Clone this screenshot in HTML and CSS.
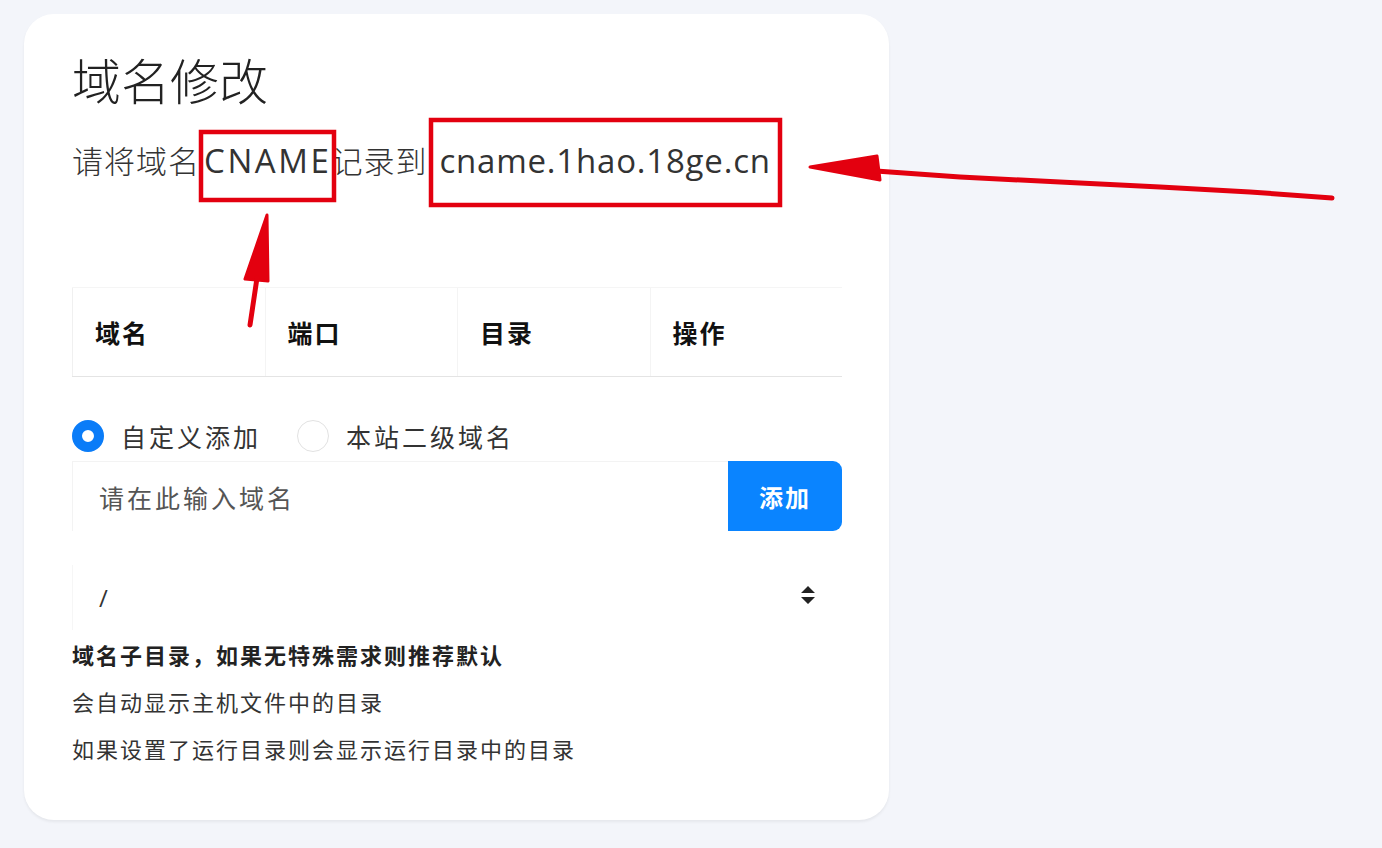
FILE: index.html
```html
<!DOCTYPE html>
<html lang="zh-CN">
<head>
    <meta charset="UTF-8">
    <meta name="viewport" content="width=device-width, initial-scale=1.0">
    <title>域名修改</title>
    <link rel="stylesheet" href="styles.css">
</head>
<body>
    <div class="card">
        <h1 class="title">域名修改</h1>
        <p class="cname-tip">请将域名<span class="latin">CNAME</span>记录到 <span class="latin host">cname.1hao.18ge.cn</span></p>

        <div class="domain-table">
            <div class="th">域名</div>
            <div class="th">端口</div>
            <div class="th">目录</div>
            <div class="th">操作</div>
        </div>

        <div class="radio-row">
            <label class="radio checked"><span class="dot"></span>自定义添加</label>
            <label class="radio"><span class="dot"></span>本站二级域名</label>
        </div>

        <div class="add-row">
            <div class="domain-input">请在此输入域名</div>
            <button class="btn-add">添加</button>
        </div>

        <div class="dir-select">
            <span>/</span>
            <svg class="sort-icon" width="16" height="20" viewBox="0 0 16 20"><path d="M8 1 L15 8 L1 8 Z M1 12 L15 12 L8 19 Z" fill="#222"/></svg>
        </div>

        <div class="help">
            <p class="strong">域名子目录，如果无特殊需求则推荐默认</p>
            <p>会自动显示主机文件中的目录</p>
            <p>如果设置了运行目录则会显示运行目录中的目录</p>
        </div>
    </div>

    <!-- 标注：红框和箭头 -->
    <svg class="marks" width="1382" height="848" viewBox="0 0 1382 848">
        <rect x="201" y="132" width="133" height="68" fill="none" stroke="#e3000f" stroke-width="4.5"/>
        <rect x="431" y="120" width="349" height="85" fill="none" stroke="#e3000f" stroke-width="4.5"/>
        <path d="M267 215 L245 279 L268 281 Z" fill="#e3000f" stroke="#e3000f" stroke-width="3" stroke-linejoin="round"/>
        <path d="M257 278 L250 325" stroke="#e3000f" stroke-width="5" stroke-linecap="round"/>
        <path d="M810 167 L877 156 L880 180 Z" fill="#e3000f" stroke="#e3000f" stroke-width="3" stroke-linejoin="round"/>
        <path d="M876 171 L960 177 L1060 182 L1160 187 L1250 192 L1332 198" fill="none" stroke="#e3000f" stroke-width="5" stroke-linecap="round"/>
    </svg>
</body>
</html>
```

FILE: styles.css
```css
body {
    margin: 0;
    padding: 14px 24px;
    background-color: #f3f5fa;
    font-family: "Noto Sans CJK SC", "Noto Sans", sans-serif;
    color: #222;
}

.card {
    width: 865px;
    height: 806px;
    box-sizing: border-box;
    padding: 35px 47px 0 48px;
    background-color: #fff;
    border-radius: 30px;
    box-shadow: 0 2px 3px rgba(0, 0, 0, 0.06);
}

.title {
    margin: 0;
    font-size: 49px;
    line-height: 60px;
    font-weight: 300;
    color: #222;
}

.cname-tip {
    margin: 27px 0 0;
    font-size: 31px;
    letter-spacing: 1px;
    line-height: 48px;
    font-weight: 300;
    color: #333;
}

.cname-tip .latin {
    font-family: "Open Sans", "Noto Sans", sans-serif;
    font-size: 33px;
    font-weight: 400;
    letter-spacing: 2.6px;
    margin-left: 4px;
}

.cname-tip .host {
    letter-spacing: 0.8px;
    margin-left: 4px;
}

/* 表头 */
.domain-table {
    margin-top: 102px;
    display: grid;
    grid-template-columns: repeat(4, 1fr);
    height: 88px;
    border-top: 1px solid #f5f5f5;
    border-bottom: 1px solid #e4e4e4;
}

.th {
    display: flex;
    align-items: center;
    padding-left: 22px;
    font-size: 25px;
    letter-spacing: 2px;
    font-weight: 700;
    color: #111;
    border-left: 1px solid #f4f4f4;
}

.th:first-child {
    border-left-color: #f0f0f0;
}

/* 单选 */
.radio-row {
    margin-top: 43px;
    display: flex;
    align-items: center;
    gap: 36px;
    height: 32px;
}

.radio {
    display: flex;
    align-items: center;
    gap: 17px;
    font-size: 25px;
    letter-spacing: 3px;
    color: #333;
}

.radio .dot {
    width: 32px;
    height: 32px;
    box-sizing: border-box;
    border-radius: 50%;
    border: 1px solid #e2e2e2;
    background: #fff;
}

.radio.checked .dot {
    border: 10px solid #0a7cf8;
}

/* 输入 + 按钮 */
.add-row {
    margin-top: 9px;
    display: flex;
    height: 70px;
}

.domain-input {
    flex: 1;
    display: flex;
    align-items: center;
    padding-left: 26px;
    font-size: 25px;
    letter-spacing: 3px;
    color: #555;
    border-top: 1px solid #f3f3f3;
    border-left: 1px solid #f3f3f3;
}

.btn-add {
    width: 114px;
    border: none;
    border-radius: 0 9px 9px 0;
    background-color: #0a84ff;
    color: #fff;
    font-family: inherit;
    font-size: 24px;
    letter-spacing: 2px;
    font-weight: 700;
}

/* 目录下拉 */
.dir-select {
    margin-top: 34px;
    height: 65px;
    display: flex;
    align-items: center;
    justify-content: space-between;
    padding: 0 26px 0 26px;
    font-family: "Open Sans", sans-serif;
    font-size: 24px;
    color: #333;
    border-left: 1px solid #f6f6f6;
}

.sort-icon {
    margin-top: -6px;
}

.help {
    margin-top: 1px;
}

.help p {
    margin: 0;
    font-size: 22px;
    letter-spacing: 2px;
    line-height: 47px;
    color: #333;
}

.help p.strong {
    font-weight: 700;
    color: #222;
}

.marks {
    position: absolute;
    top: 0;
    left: 0;
    pointer-events: none;
}
```
